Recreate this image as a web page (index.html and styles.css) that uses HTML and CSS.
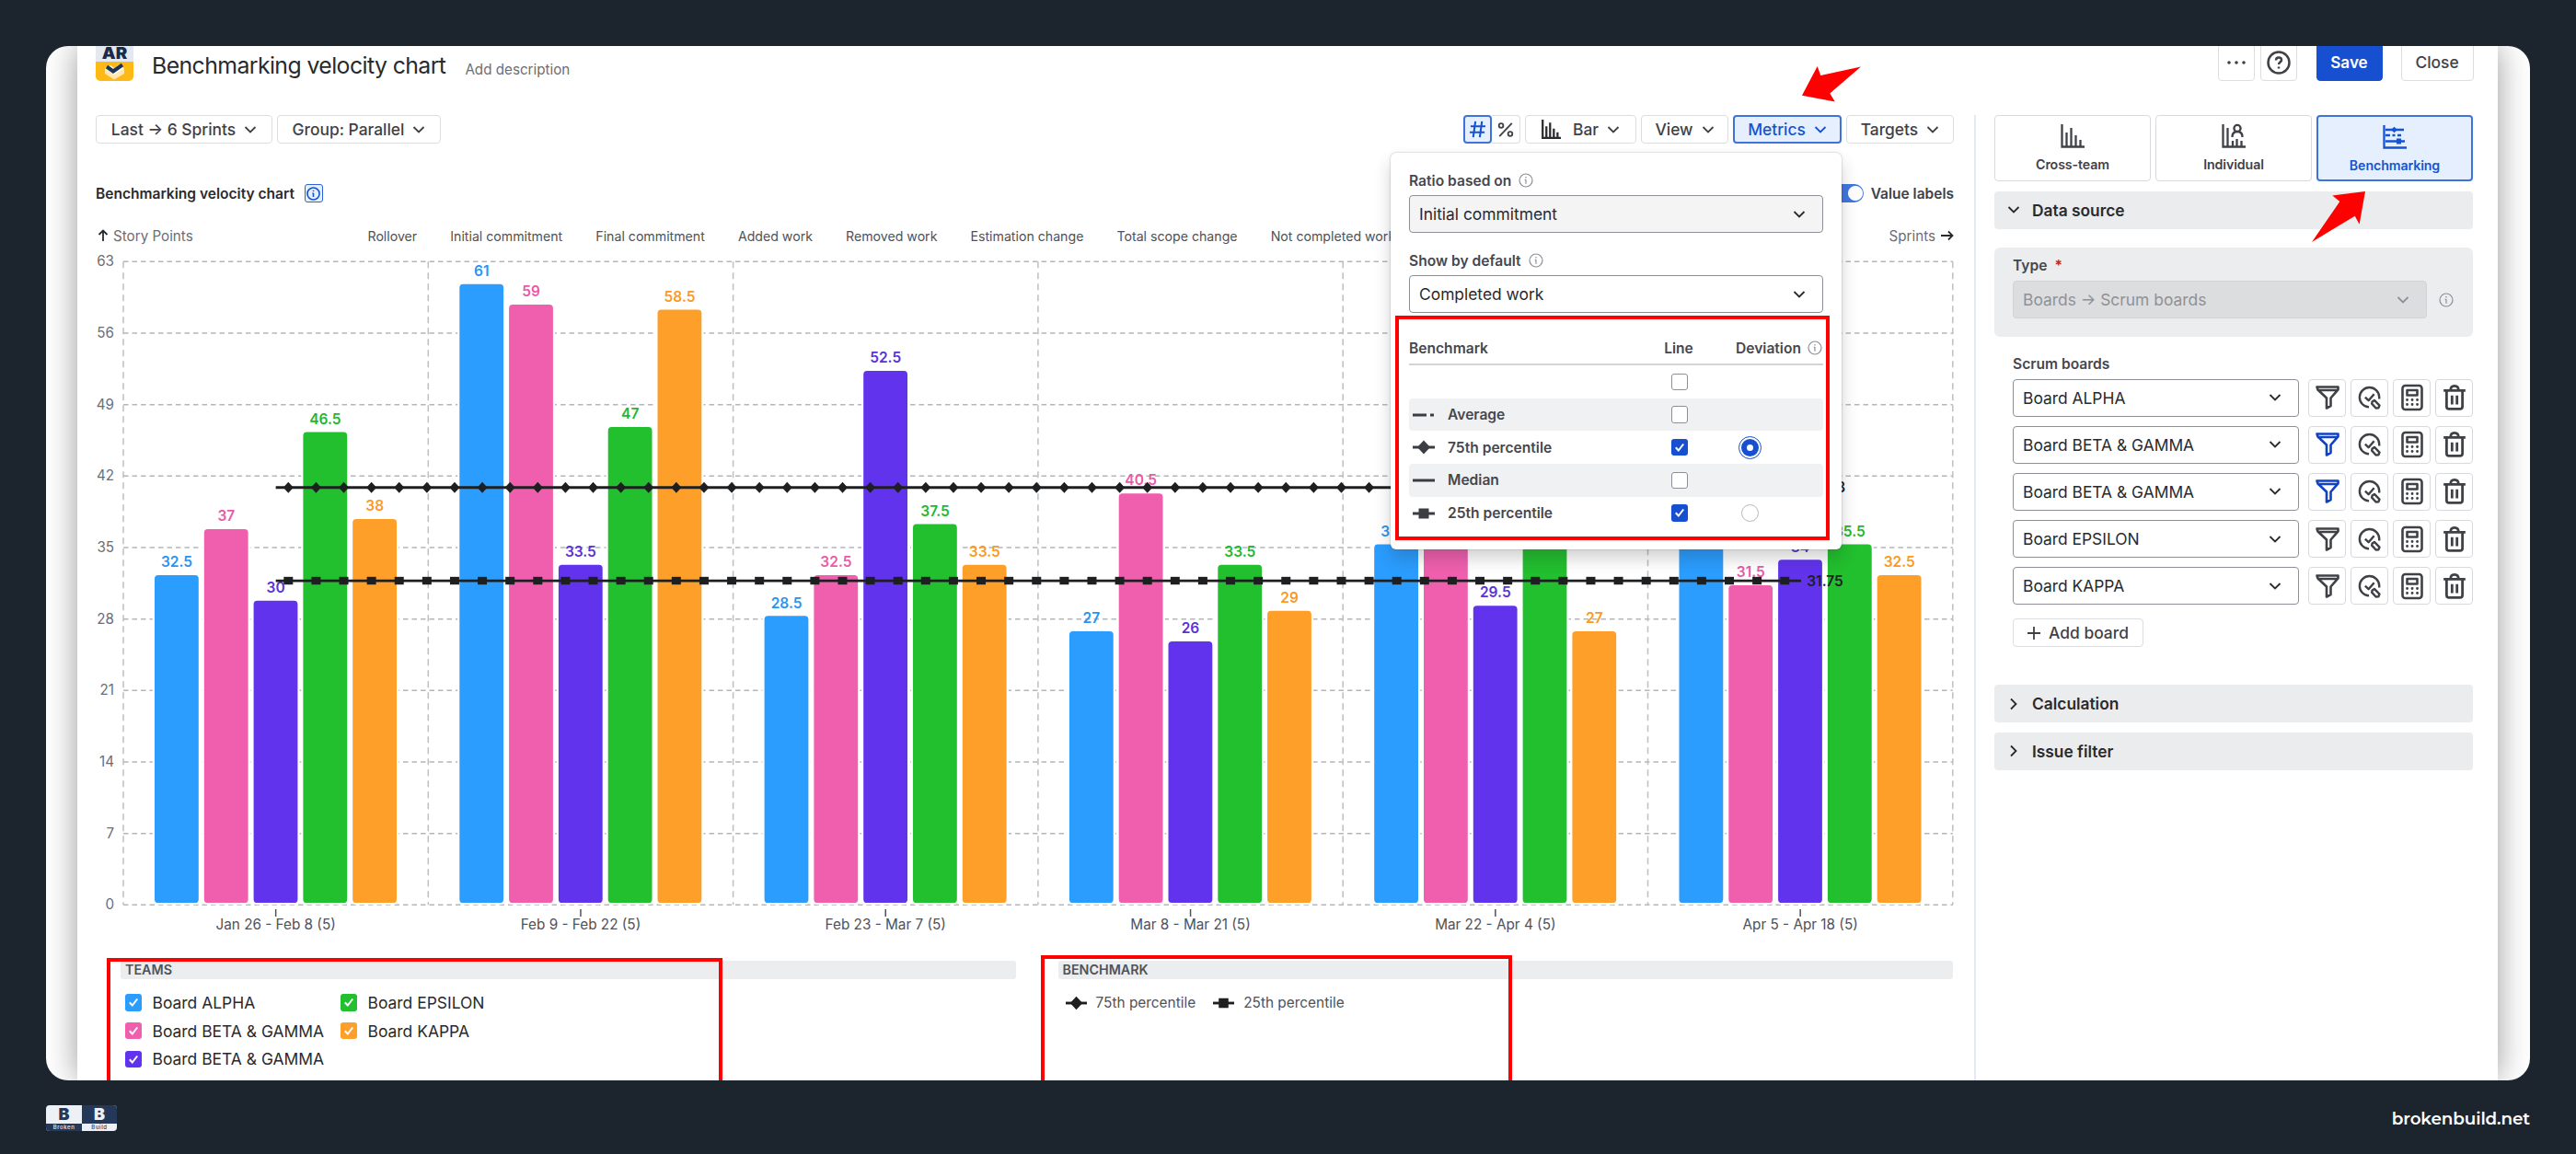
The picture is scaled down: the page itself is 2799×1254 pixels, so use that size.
FILE: index.html
```html
<!DOCTYPE html>
<html lang="en">
<head>
<meta charset="utf-8">
<title>Benchmarking velocity chart</title>
<link rel="stylesheet" href="styles.css">
</head>
<body>
<svg class="defs" aria-hidden="true">
  <symbol id="chev" viewBox="0 0 14 10"><path d="M1.5 2 7 7.5 12.5 2"/></symbol>
  <symbol id="chev-r" viewBox="0 0 10 14"><path d="M2 1.5 7.5 7 2 12.5"/></symbol>
  <symbol id="info" viewBox="0 0 16 16"><circle cx="8" cy="8" r="7"/><path d="M8 7.2v4.6M6.8 7.4H8M8 4v1.4"/></symbol>
  <symbol id="bars" viewBox="0 0 26 26"><path d="M1.5 0v24.5H26M6.5 9v15M11.5 4v20M16.5 12v12M21.5 17v7"/></symbol>
  <symbol id="person" viewBox="0 0 26 26"><path d="M1.5 0v24.5H26M6.5 4v20M12 18v6M16.5 16v8M21.5 18v6"/><circle cx="17" cy="4.5" r="3.6"/><path d="M11.5 14c0-4 2-6 5.500-6s5.500 2 5.500 6"/></symbol>
  <symbol id="bench" viewBox="0 0 26 26"><path d="M1.500 0v24.500H26M3 5h20M3 11h5M10.500 11h3M16 11h4M3 17.500h21"/><path class="solid" d="M12.500 1.800 16 5l-3.500 3.200L9 5zM15 14.500h5v6h-5z"/></symbol>
  <symbol id="funnel" viewBox="0 0 26 28"><path d="M1.500 2.500h23v2.800l-8 9.200v8.500l-4.500 2.500V14.500l-9.500-9zM2 6h22"/></symbol>
  <symbol id="audit" viewBox="0 0 28 28"><path d="M13 25.200A11.500 11.500 0 1 1 25 13.500v2M8.500 13.500l4 4 6.500-7.500"/><path d="M16.800 18.800l2.500-1.600 6 6-1.200 3-3 .2-4.800-5.200z"/></symbol>
  <symbol id="calc" viewBox="0 0 24 28"><rect x="1.500" y="1" width="21" height="26" rx="3"/><rect x="6.500" y="6" width="11" height="5.500"/><path class="dots" d="M6.500 16.500h.1M12 16.500h.1M17.500 16.500h.1M6.500 21.500h.1M12 21.500h.1M17.500 21.500h.1"/></symbol>
  <symbol id="trash" viewBox="0 0 24 26"><path d="M1 6h22M4 6.500v15.500c0 1.500 1 2.500 2.500 2.500h11c1.500 0 2.500-1 2.500-2.500V6.500M8 5.500C8 2.500 9.500 1.200 12 1.200s4 1.300 4 4.300M9.500 11v9M14.500 11v9"/></symbol>
  <symbol id="tick" viewBox="0 0 18 18"><path d="M4.800 9.300l3 3.200 5.400-7"/></symbol>
  <symbol id="diamond" viewBox="0 0 24 14"><path d="M0 7h24"/><path class="solid" d="M12-.5 19 7 12 14.500 5 7z"/></symbol>
  <symbol id="square" viewBox="0 0 24 14"><path d="M0 7h24"/><path class="solid" d="M6.500 1.500h11v11h-11z"/></symbol>
</svg>

<div class="card">
  <div class="page">
    <header class="header">
      <div class="app-logo"><b>AR</b><svg viewBox="0 0 41 21"><path d="M10 8v5l10 6.500L31 13V8z" fill="#ffe9b0"/><path d="M10 7l10 7 11-7-6-3.500-5 3.500-4-3z" fill="#fff"/><path d="M12 5.500l7 5 10-7" stroke="#1f3352" stroke-width="4" fill="none"/></svg></div>
      <h1>Benchmarking velocity chart</h1>
      <span class="desc">Add description</span>
      <div class="actions">
        <button class="btn sq"><svg class="i more" viewBox="0 0 22 6"><circle cx="3" cy="3" r="1.800"/><circle cx="11" cy="3" r="1.800"/><circle cx="19" cy="3" r="1.800"/></svg></button>
        <button class="btn sq"><svg class="i help" viewBox="0 0 26 26"><circle cx="13" cy="13" r="11.500"/><path d="M10 10.500c0-2 1.300-3 3-3s3 1 3 2.700c0 2.200-3 2.300-3 4.800M13 17.500v2"/></svg></button>
        <button class="btn primary">Save</button>
        <button class="btn close">Close</button>
      </div>
    </header>

    <div class="columns">
      <main class="main">
        <div class="toolbar">
          <button class="btn w192">Last → 6 Sprints <svg class="i chev"><use href="#chev"/></svg></button>
          <button class="btn w178">Group: Parallel <svg class="i chev"><use href="#chev"/></svg></button>
          <div class="toggle-pair">
            <button class="btn on"><svg class="i hash" viewBox="0 0 20 20"><path d="M7.500 1 5 19M15 1l-2.500 18M2 6.500h17M1 13.500h17"/></svg></button>
            <button class="btn"><svg class="i pct" viewBox="0 0 20 20"><path d="M17.500 2l-15 16"/><circle cx="4.500" cy="5" r="2.600"/><circle cx="15.500" cy="15" r="2.600"/></svg></button>
          </div>
          <button class="btn w121"><svg class="i tb-bars"><use href="#bars"/></svg>Bar <svg class="i chev"><use href="#chev"/></svg></button>
          <button class="btn w95">View <svg class="i chev"><use href="#chev"/></svg></button>
          <div class="menu-anchor">
            <button class="btn on w118">Metrics <svg class="i chev"><use href="#chev"/></svg></button>
            <section class="popover">
              <label class="label">Ratio based on <svg class="i info"><use href="#info"/></svg></label>
              <div class="select muted">Initial commitment <svg class="i chev"><use href="#chev"/></svg></div>
              <label class="label second">Show by default <svg class="i info"><use href="#info"/></svg></label>
              <div class="select">Completed work <svg class="i chev"><use href="#chev"/></svg></div>
              <div class="brow head"><span>Benchmark</span><span class="c">Line</span><span class="dev">Deviation <svg class="i info"><use href="#info"/></svg></span></div>
              <div class="brow"><span></span><i class="cb"></i></div>
              <div class="brow alt"><span><svg class="i mark" viewBox="0 0 24 14"><path d="M0 7h15M19 7h4"/></svg>Average</span><i class="cb"></i></div>
              <div class="brow"><span><svg class="i mark"><use href="#diamond"/></svg>75th percentile</span><i class="cb checked"><svg class="i"><use href="#tick"/></svg></i><i class="radio sel"></i></div>
              <div class="brow alt"><span><svg class="i mark" viewBox="0 0 24 14"><path d="M0 7h24"/></svg>Median</span><i class="cb"></i></div>
              <div class="brow"><span><svg class="i mark"><use href="#square"/></svg>25th percentile</span><i class="cb checked"><svg class="i"><use href="#tick"/></svg></i><i class="radio"></i></div>
              <div class="frame frame-pop"></div>
            </section>
          </div>
          <button class="btn w117">Targets <svg class="i chev"><use href="#chev"/></svg></button>
        </div>

        <div class="title-row">
          <h2>Benchmarking velocity chart</h2>
          <span class="info-box"><svg class="i info"><use href="#info"/></svg></span>
          <span class="switch"></span><b class="value-labels">Value labels</b>
        </div>

        <div class="metrics-row">
          <span class="axis"><svg class="i up" viewBox="0 0 12 14"><path d="M6 13V1.500M1.500 6 6 1.500 10.500 6"/></svg>Story Points</span>
          <nav class="tabs"><span>Rollover</span><span>Initial commitment</span><span>Final commitment</span><span>Added work</span><span>Removed work</span><span>Estimation change</span><span>Total scope change</span><span>Not completed work</span></nav>
          <span class="axis right">Sprints<svg class="i rt" viewBox="0 0 14 12"><path d="M0 6h12.500M8 1.500 12.500 6 8 10.500"/></svg></span>
        </div>

        <svg class="chart" id="chart" viewBox="104 275 2019 745"></svg>

        <div class="legends">
          <section class="legend teams">
            <h3>TEAMS</h3>
            <ul class="team-list">
              <li><i class="cb c-blue"><svg class="i"><use href="#tick"/></svg></i>Board ALPHA</li>
              <li><i class="cb c-pink"><svg class="i"><use href="#tick"/></svg></i>Board BETA &amp; GAMMA</li>
              <li><i class="cb c-violet"><svg class="i"><use href="#tick"/></svg></i>Board BETA &amp; GAMMA</li>
              <li><i class="cb c-green"><svg class="i"><use href="#tick"/></svg></i>Board EPSILON</li>
              <li><i class="cb c-orange"><svg class="i"><use href="#tick"/></svg></i>Board KAPPA</li>
            </ul>
            <div class="frame frame-teams"></div>
          </section>
          <section class="legend">
            <h3>BENCHMARK</h3>
            <div class="bench-list"><svg class="i mark"><use href="#diamond"/></svg><span>75th percentile</span><svg class="i mark"><use href="#square"/></svg><span>25th percentile</span></div>
            <div class="frame frame-bench"></div>
          </section>
        </div>
      </main>

      <aside class="side">
        <div class="modes">
          <div class="mode"><svg class="i"><use href="#bars"/></svg>Cross-team</div>
          <div class="mode"><svg class="i"><use href="#person"/></svg>Individual</div>
          <div class="mode on"><svg class="i"><use href="#bench"/></svg>Benchmarking</div>
        </div>
        <div class="section"><svg class="i chev"><use href="#chev"/></svg>Data source</div>
        <div class="type-panel">
          <label class="label">Type <em>*</em></label>
          <div class="type-row"><div class="select disabled">Boards → Scrum boards <svg class="i chev"><use href="#chev"/></svg></div><svg class="i info"><use href="#info"/></svg></div>
        </div>
        <label class="label boards-label">Scrum boards</label>
        <div class="boards" id="boards"></div>
        <button class="btn add"><svg class="i plus" viewBox="0 0 14 14"><path d="M7 0v14M0 7h14"/></svg>Add board</button>
        <div class="section calc"><svg class="i chev-r"><use href="#chev-r"/></svg>Calculation</div>
        <div class="section"><svg class="i chev-r"><use href="#chev-r"/></svg>Issue filter</div>
      </aside>
    </div>
  </div>
  <svg class="pointer p1" viewBox="0 0 64 39"><path d="M16.700 0 20.300 10 64 .4 30.300 29.400 35.800 38.400 0 31.700z"/></svg>
  <svg class="pointer p2" viewBox="0 0 58 55"><path d="M58 0 22.300 4.400 30.300 11 0 55 46.800 26.700 51.600 35.700z"/></svg>
</div>

<footer class="footer">
  <div class="brand"><b>B</b><b class="dark">B</b><small class="dark">Broken</small><small>Build</small></div>
  <span>brokenbuild.net</span>
</footer>
<script src="chart.js"></script>
</body>
</html>
```
FILE: styles.css
```css
*{box-sizing:border-box}
body{margin:0;width:2799px;height:1254px;overflow:hidden;background:#1c242e;font-family:Inter,"Liberation Sans",sans-serif;color:#292a2e}
h1,h2,h3,ul{margin:0;padding:0}
button{font:inherit}
.defs{position:absolute;width:0;height:0}
.i{fill:none;stroke:currentColor;stroke-width:1.8;flex:none;overflow:visible}
symbol{overflow:visible}
.solid{fill:currentColor;stroke:none}
.chev{width:14px;height:10px}
.chev-r{width:10px;height:14px}
.info{width:16px;height:16px;stroke-width:1.2;color:#8c8f97}

.card{position:relative;width:2699px;height:1124px;margin:50px 0 0 50px;border-radius:24px;background:#fff;overflow:hidden}
.page{height:1124px;margin:0 35px 0 34px;background:#fff;box-shadow:0 0 34px rgba(0,0,0,.4)}

.header{display:flex;height:38px;align-items:flex-end;padding:0 26.500px 0 20px}
.app-logo{width:41px;height:38px;background:#ffb914;border-radius:0 0 5px 5px;overflow:hidden;display:flex;flex-direction:column}
.app-logo b{height:17px;background:#e4e8f0;color:#172b4d;font-weight:900;font-size:17px;line-height:17px;text-align:center;transform:scaleX(1.1);flex:none}
.app-logo svg{width:41px;height:21px;flex:none}
h1{font-size:24.800px;font-weight:400;letter-spacing:-.58px;line-height:30px;margin:0 0 2px 20px}
.desc{font-size:15.200px;color:#6b6e76;line-height:20px;margin:0 0 2px 21px}
.actions{display:flex;margin-left:auto}
.btn{height:31px;padding:0;display:flex;align-items:center;justify-content:center;border:1.500px solid #dcdddf;border-radius:4px;background:#fff;color:#3f4147;font-size:17.400px;font-weight:500;white-space:nowrap;flex:none}
.btn .chev{margin-left:9px}
.btn.on{background:#e5effd;border:2px solid #3e74da;color:#1654cf}
.actions .btn{height:41px}
.sq{width:40px;margin-right:6px}
.more{width:22px;height:6px;fill:currentColor;stroke:none}
.help{width:26px;height:26px;stroke-width:2.500}
.actions .primary{width:72px;margin:0 20px 0 15px;background:#1650d0;border-color:#1650d0;color:#fff;font-weight:600;font-size:17.100px}
.close{width:79px}

.columns{display:flex;margin-top:37px}
.main{width:2019px;margin-left:20px}
.toolbar{display:flex;gap:5px;height:31px}
.w192{width:192px}.w178{width:178px}.w121{width:121px}.w95{width:95px}.w118{width:118px}.w117{width:117px}
.toggle-pair{display:flex;margin-left:auto}
.toggle-pair .btn{width:31px}
.toggle-pair .btn:last-child{border-left:0;border-radius:0 4px 4px 0}
.hash{width:19px;height:19px;stroke-width:2.200}
.pct{width:18px;height:18px;stroke-width:2}
.tb-bars{width:21px;height:21px;stroke-width:2.800;margin-right:13px;color:#292a2e}
.menu-anchor{position:relative}
.popover{position:absolute;z-index:5;right:0;top:41px;width:490px;height:431px;padding:20px 20px 0 20px;background:#fff;border-radius:6px;box-shadow:0 0 2px rgba(30,31,33,.35),0 10px 18px rgba(30,31,33,.2)}
.label{display:flex;align-items:center;height:20px;font-size:15.600px;font-weight:600;color:#45474d}
.label .info{margin-left:8px}
.select{display:flex;align-items:center;justify-content:space-between;height:41px;border:1.500px solid #8c8f97;border-radius:4px;background:#fff;padding:0 18px 0 10px;font-size:17.400px;color:#292a2e;white-space:nowrap}
.popover .select{margin-top:6px}
.select.muted{background:#f4f4f4}
.label.second{margin-top:20px}
.brow{display:grid;grid-template-columns:262px 44px 1fr;align-items:center;height:35.700px;font-size:15.600px;font-weight:600;color:#45474d;border-radius:4px}
.brow.head{height:37px;margin-top:20px;border-bottom:2.500px solid #d3d4d6;border-radius:0;padding-top:1px}
.brow.alt{background:#f0f1f2}
.brow span{display:flex;align-items:center}
.brow .c{justify-content:center;margin-left:18px}
.brow .dev{justify-content:flex-end;gap:7px;margin-right:1px}
.mark{width:24px;height:14px;stroke-width:3;margin:0 14px 0 4px;color:#3b3d42}
.cb{width:18.500px;height:18.500px;border-radius:3px;border:1.500px solid #8c8f97;background:#fff;display:block}
.brow .cb{margin-left:22.500px}
.cb .i{display:block;width:18px;height:18px;color:#fff;stroke-width:2}
.cb.checked{background:#1650d0;border:0}
.radio{width:19px;height:19px;border-radius:50%;border:1.500px solid #b7b9be;margin-left:55px;background:#fff}
.radio.sel{border:6px solid #1650d0;outline:1.500px solid #1650d0;outline-offset:2px}
.frame{position:absolute;border:4px solid #f00;pointer-events:none}
.frame-pop{left:5px;top:177px;width:472px;height:244px}

.title-row{display:flex;align-items:center;height:20px;margin-top:44px}
h2{font-size:15.550px;font-weight:600}
.info-box{width:20px;height:20px;margin-left:11px;border:1.500px solid #2a64d8;border-radius:3px;background:#e5effd;display:flex;align-items:center;justify-content:center}
.info-box .info{width:15px;height:15px;color:#1654cf;stroke-width:1.700}
.switch{width:38px;height:20px;border-radius:10px;margin-left:auto;margin-right:8px;background:radial-gradient(circle at 29px 10px,#fff 7.500px,#3f76e0 8.500px)}
.value-labels{font-size:15.500px;font-weight:600;color:#3f4147}
.metrics-row{display:flex;align-items:center;height:20px;margin-top:26px}
.axis{width:293px;display:flex;align-items:center;color:#6b6e76;font-size:15.200px}
.axis .i{color:#292a2e}
.up{width:12px;height:14px;margin:0 5px 0 2px}
.tabs{display:flex;gap:36.100px;font-size:14.150px;color:#505258;margin-left:2.500px;flex:1;white-space:nowrap}
.axis.right{width:auto}
.rt{width:14px;height:12px;margin-left:6px}
.chart{display:block;width:2019px;height:745px;margin-top:9px}
.grid{stroke:#b4b6ba;stroke-width:1.500;stroke-dasharray:5.500 4;fill:none}
.grid.v{stroke:#bdbfc2;stroke-dasharray:7 5}
.tick-label{font-size:15.200px;fill:#6b6e76}
.cat{font-size:15.300px;fill:#505258;text-anchor:middle}
.val{font-size:15.500px;font-weight:600;text-anchor:middle}
.ref{stroke:#1e1f21;stroke-width:2.800}
.pt{fill:#1e1f21}

.legends{display:flex;gap:46px;margin:24px 0 0 27px}
.legend{position:relative;width:972.500px}
h3{height:20px;line-height:20px;padding-left:5px;background:#ebedee;border-radius:3px;color:#505258;font-size:14.300px;font-weight:600}
.team-list{list-style:none;display:grid;grid-template-rows:repeat(3,30.800px);grid-auto-flow:column;justify-content:start;margin-top:10px;font-size:17.450px}
.team-list li{display:flex;align-items:center;width:234px}
.team-list .cb{border:0;margin:0 11.500px 0 4.500px}
.c-blue{background:#2a9dff}.c-pink{background:#ef5fad}.c-violet{background:#6133ed}.c-green{background:#22bf2e}.c-orange{background:#fe9f29}
.bench-list{display:flex;align-items:center;height:20px;margin-top:15.500px;font-size:15.400px;color:#505258}
.bench-list .mark{width:23px;margin:0 10px 0 8px;color:#1e1f21}
.bench-list span{margin-right:11px}
.frame-teams{left:-15px;top:-3px;width:669px;height:180px}
.frame-bench{left:-19px;top:-6px;width:512px;height:180px}

.side{width:544px;height:1100px;margin-left:22px;border-left:2px solid #e3e9f6;padding-left:20px}
.modes{display:grid;grid-template-columns:repeat(3,170px);gap:5px}
.mode{height:72px;border:1.500px solid #d8d9dc;border-radius:4px;display:flex;flex-direction:column;align-items:center;padding-top:9px;gap:8px;font-size:14.200px;line-height:20px;font-weight:600;letter-spacing:-.1px;color:#3f4147}
.mode .i{width:26px;height:26px;stroke-width:2.300}
.mode.on{background:#e5effd;border:2px solid #3e74da;color:#1654cf;padding-top:8.500px}
.section{width:520px;height:41px;margin-top:10.500px;background:#ebeced;border-radius:4px;display:flex;align-items:center;font-size:17.350px;font-weight:600;color:#292a2e}
.section .chev{margin:0 13px 0 14px}
.section .chev-r{margin:0 15px 0 16px}
.type-panel{width:520px;height:97px;margin-top:20.500px;background:#ebedee;border-radius:6px;padding:9px 20px 0}
.type-panel em{font-style:normal;color:#ae2e24;margin-left:8px}
.type-row{display:flex;align-items:center;margin-top:7px}
.select.disabled{width:450px;background:#dcdddf;border-color:#d2d3d6;color:#8f9197}
.type-row .info{margin-left:13px}
.boards-label{margin:19.500px 0 6px 20px}
.boards{display:flex;flex-direction:column;gap:10.200px;margin-left:20px}
.board{display:flex;width:500px;gap:5px}
.board .select{width:311px;margin-right:5px;font-size:17.400px}
.tool{width:41px;height:41px;border:1.500px solid #d8d9dc;border-radius:4px;display:flex;align-items:center;justify-content:center;color:#3f4147;flex:none}
.tool .i{width:26px;height:28px;stroke-width:2.600;stroke-linejoin:round}
.tool.blue{color:#0f42c4}
.dots{stroke-width:2.800;stroke-linecap:round}
.add{width:142px;margin:15px 0 0 20px}
.plus{width:14px;height:14px;margin-right:9px}
.section.calc{margin-top:41px}

.pointer{position:absolute;fill:#f00}
.p1{left:1907.700px;top:22.300px;width:64px;height:39px}
.p2{left:2462.400px;top:158.300px;width:58px;height:55px}

.footer{display:flex;justify-content:space-between;align-items:center;height:30px;margin:26px 50px 0;color:#fff;font-family:Montserrat,Inter,sans-serif;font-size:18.400px;font-weight:600}
.footer>span{letter-spacing:-.12px}
.brand{display:grid;grid-template-columns:39px 38px;grid-template-rows:20px 8px;width:77px;height:28px;border-radius:4px;overflow:hidden;background:#edf0f5;color:#24395a;text-align:center}
.brand b{font:900 18px/20px Inter,sans-serif}
.brand small{font:500 6px/8px Inter,sans-serif;letter-spacing:.6px}
.brand .dark{color:#edf0f5;background:#24395a}
```
FILE: chart.js
```js
const NS = 'http://www.w3.org/2000/svg';
const chart = document.getElementById('chart');
const add = (tag, attrs, text) => {
  const el = document.createElementNS(NS, tag);
  for (const k in attrs) el.setAttribute(k, attrs[k]);
  if (text !== undefined) el.textContent = text;
  chart.appendChild(el);
};

const LEFT = 134, TOP = 284.3, BOTTOM = 983.3, COL = 331.3;
const y = v => BOTTOM - v * (BOTTOM - TOP) / 63;
const colors = ['#2a9dff', '#ef5fad', '#6133ed', '#22bf2e', '#fe9f29'];
const labelColors = ['#2a94f0', '#ea5aa8', '#5a32d8', '#22b82e', '#fa9a25'];
const sprints = [
  ['Jan 26 - Feb 8 (5)', [32.5, 37, 30, 46.5, 38]],
  ['Feb 9 - Feb 22 (5)', [61, 59, 33.5, 47, 58.5]],
  ['Feb 23 - Mar 7 (5)', [28.5, 32.5, 52.5, 37.5, 33.5]],
  ['Mar 8 - Mar 21 (5)', [27, 40.5, 26, 33.5, 29]],
  ['Mar 22 - Apr 4 (5)', [35.5, 38, 29.5, 37, 27]],
  ['Apr 5 - Apr 18 (5)', [36, 31.5, 34, 35.5, 32.5]]
];

for (let v = 0; v <= 63; v += 7) {
  add('path', { class: 'grid', d: `M${LEFT} ${y(v)}H${LEFT + COL * 6}` });
  add('text', { class: 'tick-label', x: 124, y: y(v) + 5, 'text-anchor': 'end' }, v);
}
for (let i = 0; i <= 6; i++) add('path', { class: 'grid v', d: `M${LEFT + COL * i} ${TOP}V${BOTTOM}` });

sprints.forEach(([name, values], s) => {
  const mid = LEFT + COL * (s + .5);
  add('path', { d: `M${mid} 988v8`, stroke: '#505258', 'stroke-width': 1.5 });
  add('text', { class: 'cat', x: mid, y: 1009.5 }, name);
  values.forEach((v, b) => {
    const x = LEFT + COL * s + 34 + b * 53.8;
    add('rect', { x: x - 1.1, y: y(v) + 1.1, width: 50, height: BOTTOM - y(v) - 2.2, rx: 5, fill: colors[b], stroke: '#fff', 'stroke-width': 2.2 });
  });
});
sprints.forEach(([, values], s) => values.forEach((v, b) =>
  add('text', { class: 'val', x: LEFT + COL * s + 58 + b * 53.8, y: y(v) - 6.5, fill: labelColors[b] }, v)));

const X0 = LEFT + COL / 2, X1 = 1957;
for (const v of [40.88, 31.75]) {
  const py = y(v);
  add('path', { class: 'ref', d: `M${X0} ${py}H${X1}` });
  for (let x = 313.3; x < X1 - 10; x += 30.11) {
    add('path', { class: 'pt', d: v > 40 ? `M${x} ${py - 6}l5.500 6-5.500 6-5.500-6z` : `M${x - 5} ${py - 4.2}h10v8.400h-10z` });
  }
  add('text', { class: 'val', x: 1983, y: py + 5.5, fill: '#1e1f21' }, v);
}

const boards = ['Board ALPHA', 'Board BETA & GAMMA', 'Board BETA & GAMMA', 'Board EPSILON', 'Board KAPPA'];
document.getElementById('boards').innerHTML = boards.map((name, i) => `
  <div class="board">
    <div class="select">${name.replace('&', '&amp;')} <svg class="i chev"><use href="#chev"/></svg></div>
    ${['funnel', 'audit', 'calc', 'trash'].map(k =>
      `<span class="tool${k === 'funnel' && (i === 1 || i === 2) ? ' blue' : ''}"><svg class="i"><use href="#${k}"/></svg></span>`).join('')}
  </div>`).join('');
```
